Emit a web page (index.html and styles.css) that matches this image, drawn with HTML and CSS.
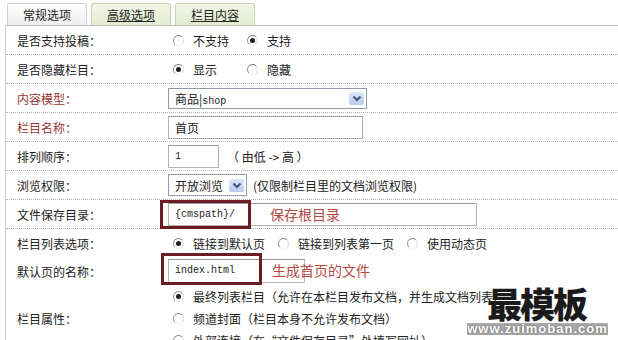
FILE: index.html
```html
<!DOCTYPE html>
<html lang="zh-CN">
<head>
    <meta charset="UTF-8">
    <title>栏目设置</title>
    <link rel="stylesheet" href="styles.css">
</head>
<body>
    <div class="tabs">
        <div class="tab active">常规选项</div>
        <div class="tab"><span class="link">高级选项</span></div>
        <div class="tab"><span class="link">栏目内容</span></div>
    </div>

    <div class="form">
        <div class="row">
            <div class="label">是否支持投稿：</div>
            <div class="field yn">
                <span class="radio"></span><span class="opt">不支持</span>
                <span class="radio on"></span><span class="opt">支持</span>
            </div>
        </div>
        <div class="row">
            <div class="label">是否隐藏栏目：</div>
            <div class="field yn">
                <span class="radio on"></span><span class="opt">显示</span>
                <span class="radio"></span><span class="opt">隐藏</span>
            </div>
        </div>
        <div class="row">
            <div class="label red">内容模型：</div>
            <div class="field">
                <div class="select model">
                    <span>商品|<span class="mono">shop</span></span>
                    <span class="btn">
                        <svg width="10" height="7" viewBox="0 0 10 7"><path d="M1.5 1.5 L5 5 L8.5 1.5" fill="none" stroke="#3d5484" stroke-width="2"/></svg>
                    </span>
                </div>
            </div>
        </div>
        <div class="row">
            <div class="label red">栏目名称：</div>
            <div class="field">
                <div class="input w-name">首页</div>
            </div>
        </div>
        <div class="row">
            <div class="label">排列顺序：</div>
            <div class="field">
                <div class="input w-order mono">1</div>
                <span class="hint">（ 由低 -&gt; 高 ）</span>
            </div>
        </div>
        <div class="row">
            <div class="label">浏览权限：</div>
            <div class="field">
                <div class="select perm">
                    <span>开放浏览</span>
                    <span class="btn">
                        <svg width="10" height="7" viewBox="0 0 10 7"><path d="M1.5 1.5 L5 5 L8.5 1.5" fill="none" stroke="#3d5484" stroke-width="2"/></svg>
                    </span>
                </div>
                <span class="hint narrow">(仅限制栏目里的文档浏览权限)</span>
            </div>
        </div>
        <div class="row">
            <div class="label">文件保存目录：</div>
            <div class="field">
                <div class="anchor">
                    <div class="input w-dir mono">{cmspath}/</div>
                    <span class="mark mark-dir"></span>
                    <span class="note note-dir">保存根目录</span>
                </div>
            </div>
        </div>
        <div class="row plain">
            <div class="label">栏目列表选项：</div>
            <div class="field">
                <span class="radio on"></span><span class="opt">链接到默认页</span>
                <span class="radio"></span><span class="opt">链接到列表第一页</span>
                <span class="radio"></span><span class="opt">使用动态页</span>
            </div>
        </div>
        <div class="row plain">
            <div class="label">默认页的名称：</div>
            <div class="field">
                <div class="anchor">
                    <div class="input w-index mono">index.html</div>
                    <span class="mark mark-index"></span>
                    <span class="note note-index">生成首页的文件</span>
                </div>
            </div>
        </div>
        <div class="row last">
            <div class="label">栏目属性：</div>
            <div class="field lines">
                <div class="line"><span class="radio on"></span><span class="opt">最终列表栏目（允许在本栏目发布文档，并生成文档列表）</span></div>
                <div class="line"><span class="radio"></span><span class="opt">频道封面（栏目本身不允许发布文档）</span></div>
                <div class="line"><span class="radio"></span><span class="opt">外部连接（在“文件保存目录”处填写网址）</span></div>
            </div>
        </div>
    </div>

    <div class="watermark">
        <div class="wm-title">最模板</div>
        <div class="wm-url">www.zuimoban.com</div>
    </div>
</body>
</html>
```

FILE: styles.css
```css
body {
    margin: 0;
    font-family: "Noto Sans CJK SC", "Liberation Sans", sans-serif;
    font-size: 12px;
    color: #222;
    background: #fff;
    overflow: hidden;
}

/* tabs */
.tabs {
    display: flex;
    gap: 4px;
    height: 22px;
    padding: 3px 0 0 7px;
}
.tab {
    width: 80px;
    height: 22px;
    box-sizing: border-box;
    border: 1px solid #c9d2b8;
    border-bottom: none;
    border-radius: 3px 3px 0 0;
    background: linear-gradient(#f1f6e6, #e3ecd0);
    text-align: center;
    line-height: 21px;
}
.tab.active {
    border-color: #cfcfcf;
    background: linear-gradient(#ffffff, #eeeeee);
}
.link { text-decoration: underline; }

/* form table */
.form {
    margin-left: 5px;
    border-left: 1px solid #cccccc;
    border-top: 1px solid #bdbdbd;
}
.row {
    display: grid;
    grid-template-columns: 162px 1fr;
    align-items: center;
    height: 28px;
    border-bottom: 1px dotted #b5b5b5;
}
.row.plain { border-bottom: none; }
.row.last {
    height: auto;
    border-bottom: none;
}
.label { padding-left: 11px; }
.label.red { color: #9b3434; }
.field {
    display: flex;
    align-items: center;
}

/* radios */
.radio {
    position: relative;
    flex: none;
    width: 11px;
    height: 11px;
    margin-left: 5px;
    box-sizing: border-box;
    border: 1px solid;
    border-color: #7d7d7d #dcdcdc #f2f2f2 #9a9a9a;
    border-radius: 50%;
    background: #fff;
}
.radio.on::after {
    content: "";
    position: absolute;
    left: 2px;
    top: 2px;
    width: 5px;
    height: 5px;
    border-radius: 50%;
    background: #1e1e1e;
}
.opt {
    margin-left: 9px;
    margin-right: 8px;
    white-space: nowrap;
}
.yn .opt {
    width: 44px;
    margin-right: 5px;
}
.lines {
    flex-direction: column;
    align-items: flex-start;
}
.line {
    display: flex;
    align-items: center;
    height: 22px;
}

/* inputs and selects */
.mono { font-family: "Liberation Mono", monospace; font-size: 10px; }
.input {
    height: 23px;
    box-sizing: border-box;
    border: 1px solid #b3b3b3;
    border-top-color: #9a9a9a;
    padding-left: 6px;
    line-height: 21px;
    background: #fff;
}
.w-name { width: 195px; }
.w-order { width: 51px; }
.w-dir { width: 309px; }
.w-index { width: 137px; height: 24px; line-height: 22px; }

.select {
    display: flex;
    align-items: center;
    justify-content: space-between;
    height: 21px;
    box-sizing: border-box;
    border: 1px solid #8f9aa8;
    padding: 0 2px 0 6px;
    background: #fff;
}
.select.model { width: 199px; }
.select.perm { width: 79px; height: 22px; }
.btn {
    display: flex;
    align-items: center;
    justify-content: center;
    width: 15px;
    height: 13px;
    border-radius: 2px;
    background: linear-gradient(#dbe6fb, #b9cbef);
}
.hint { margin-left: 8px; white-space: nowrap; }
.hint.narrow { margin-left: 6px; }

/* red annotations */
.anchor { position: relative; }
.mark {
    position: absolute;
    box-sizing: border-box;
    border: 3px solid #6c1d23;
}
.mark-dir { left: -8px; top: -3px; width: 91px; height: 29px; }
.mark-index { left: -7px; top: -6px; width: 101px; height: 32px; }
.note {
    position: absolute;
    top: 0;
    font-size: 14px;
    line-height: 23px;
    color: #b4483f;
    white-space: nowrap;
}
.note-dir { left: 102px; }
.note-index { left: 104px; }

/* watermark */
.watermark {
    position: absolute;
    left: 467px;
    top: 283px;
    width: 141px;
}
.wm-title {
    font-size: 35px;
    font-weight: 900;
    line-height: 40px;
    color: #1b1b1b;
    letter-spacing: -2px;
    padding-left: 20px;
}
.wm-url {
    font-family: "Liberation Sans", sans-serif;
    font-size: 13px;
    font-weight: bold;
    line-height: 12px;
    color: #fff;
    background: #a9a9a9;
    letter-spacing: 1px;
    text-align: center;
    text-shadow: 0 0 2px #555;
}
```
